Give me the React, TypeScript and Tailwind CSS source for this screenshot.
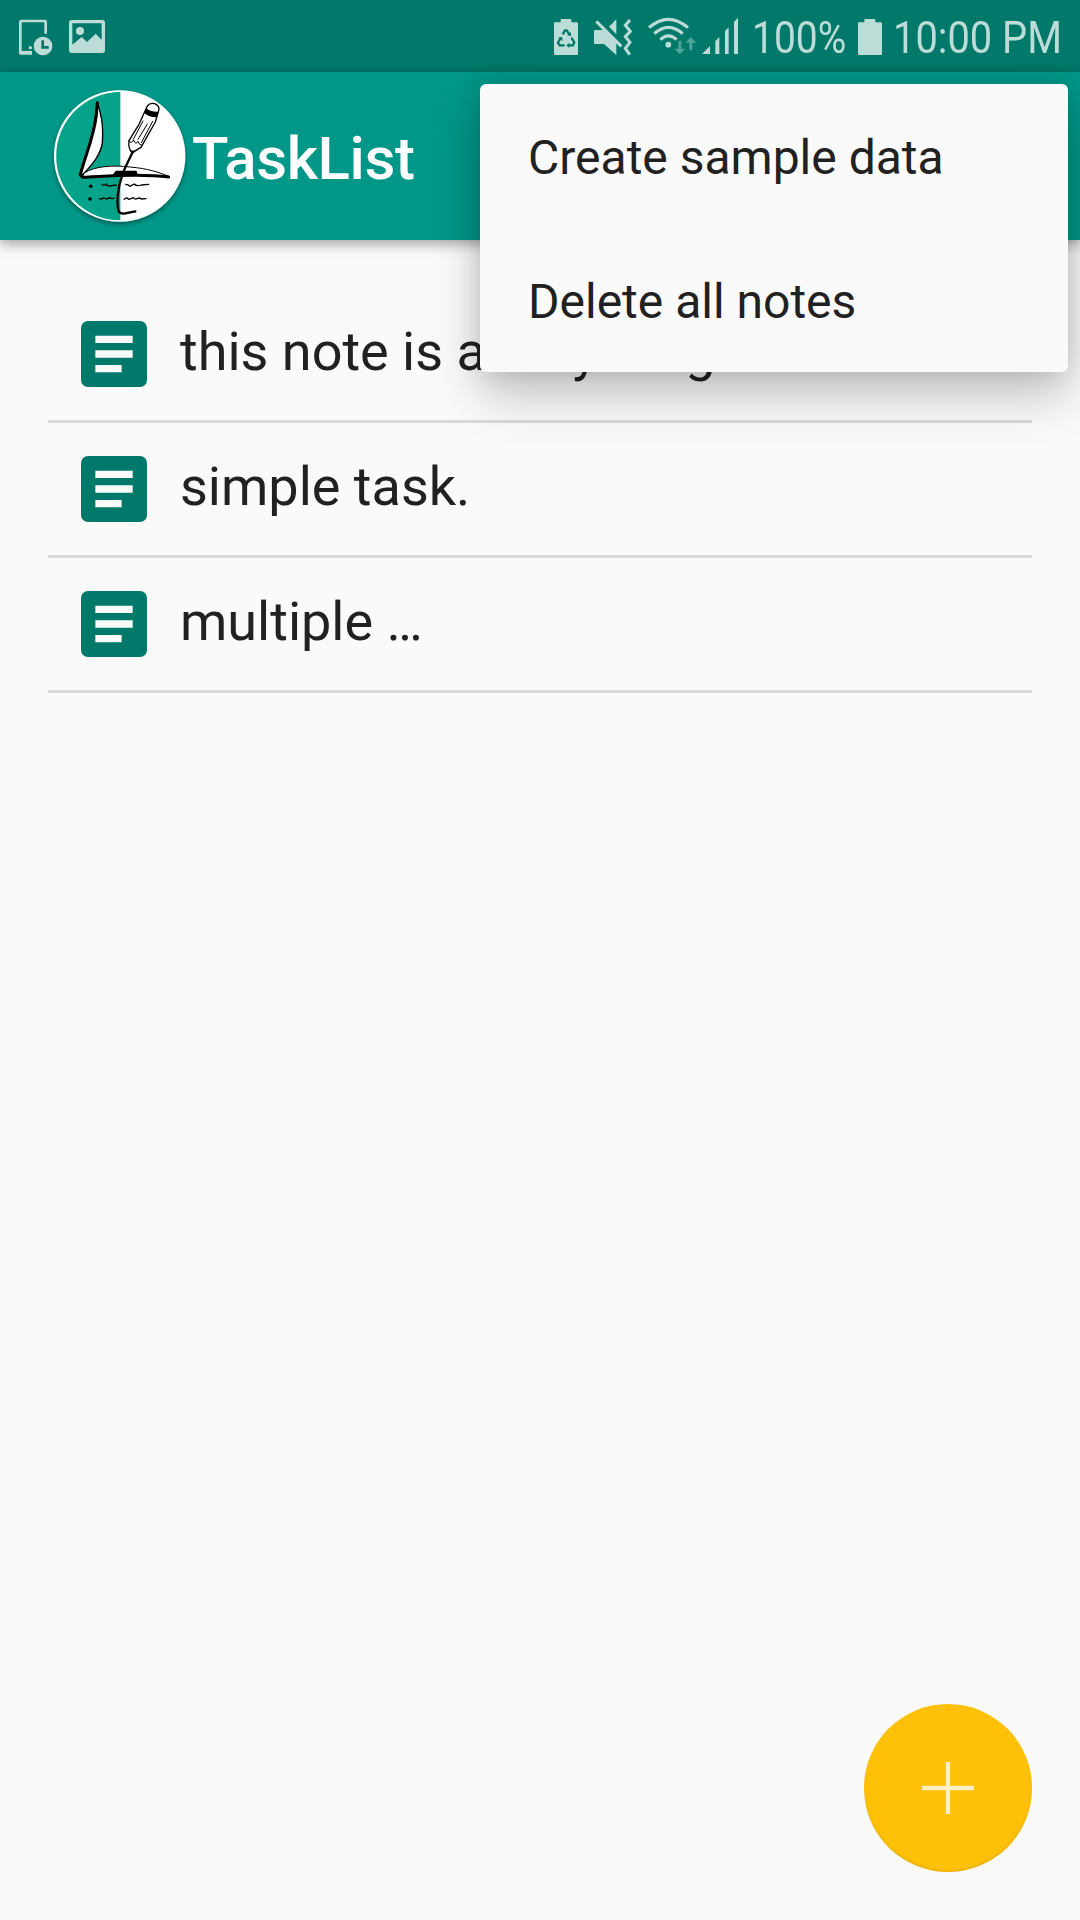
import React from "react";

const STATUS = "#bcdcd8";

function StatusBar() {
  return (
    <div className="flex h-[72px] w-full shrink-0 items-start bg-[#00796b] text-[#bcdcd8]">
      {/* notification icons */}
      <svg className="h-[72px] w-[120px] shrink-0" viewBox="0 0 360 216" fill={STATUS}>
        <path d="M96 158H63q-2 0-2-2V66q0-3 3-3H134q3 0 3 3V101" fill="none" stroke={STATUS} strokeWidth="8" />
        <path d="M57 153h39v11H62q-5 0-5-5z" />
        <circle cx="91" cy="143" r="5" />
        <circle cx="129" cy="138" r="28" />
        <path d="M128 121v21h18" fill="none" stroke="#00796b" strokeWidth="8" />
        <path
          fillRule="evenodd"
          d="M215 60H307q8 0 8 8V151q0 8-8 8H215q-8 0-8-8V68q0-8 8-8ZM217 70V134L245 111 261 126 287 101 305 119V70Z"
        />
        <circle cx="240" cy="93" r="12" />
      </svg>
      <div className="flex-1" />
      {/* system icons */}
      <svg className="h-[72px] w-[210px] shrink-0" viewBox="0 0 630 216" fill={STATUS}>
        <path d="M42 70q0-3 3-3H62V60q0-3 3-3H91q3 0 3 3v7h17q3 0 3 3v92q0 3-3 3H45q-3 0-3-3Z" />
        <g fill="none" stroke="#00796b" strokeWidth="7">
          <path d="M68 103 75 91H80L88 103" />
          <path d="M94 113 103 127 99 136H84" />
          <path d="M74 136H59L54 128 62 114" />
        </g>
        <path d="M81 106 93 108 93 96ZM88 128V144L79 136ZM54 114 66 110 68 123Z" fill="#00796b" />
        <path d="M165 90H190L229 128V165L192 132H165q-3 0-3-3V93q0-3 3-3ZM207 80 229 58V103Z" />
        <path d="M173 60 250 136" stroke="#00796b" strokeWidth="9" />
        <path d="M169 64 244 139" stroke={STATUS} strokeWidth="9" />
        <path d="M270 60 256 76 271 94 256 110 270 127 256 145 269 164" fill="none" stroke={STATUS} strokeWidth="9" />
        <g fill="none" stroke={STATUS} strokeWidth="9.500">
          <path d="M327 83Q385 33 444 83" />
          <path d="M343 101Q385 63 428 101" />
          <path d="M361 119Q385 96 410 119" />
        </g>
        <circle cx="385" cy="134" r="8.500" />
        <g fill="#4ea298">
          <path d="M415 122h9v24h12L419.500 163 403 146h12ZM448 151h9V128h12L452.500 111 436 128h12Z" />
        </g>
        <path d="M486 162 510 138V162ZM526 123 538 111V162H526ZM555 93 566 82V162H555ZM582 66 594 53V162H582Z" />
      </svg>
      <div className="w-[102px] pl-[2px] pt-[8px]">
        <span className="block w-max origin-left scale-x-[0.865] text-[45px] leading-[60px]">100%</span>
      </div>
      <svg className="h-[72px] w-[36px] shrink-0" viewBox="0 0 108 216" fill={STATUS}>
        <path d="M18 70q0-3 3-3H37V60q0-3 3-3H67q3 0 3 3v7h17q3 0 3 3v92q0 3-3 3H21q-3 0-3-3Z" />
      </svg>
      <div className="w-[192px] pl-[5px] pt-[8px]">
        <span className="block w-max origin-left scale-x-[0.885] text-[45px] leading-[60px]">10:00 PM</span>
      </div>
    </div>
  );
}

function Logo() {
  return (
    <svg className="h-[160px] w-[160px] shrink-0" viewBox="0 0 480 480">
      <defs>
        <filter id="logoShadow" x="-20%" y="-20%" width="140%" height="140%">
          <feDropShadow dx="0" dy="7" stdDeviation="6" floodColor="#000" floodOpacity="0.4" />
        </filter>
      </defs>
      <circle cx="239" cy="228" r="197" fill="#fff" filter="url(#logoShadow)" />
      <path d="M241 36A192 192 0 0 0 241 421Z" fill="#05a389" />
      <g stroke="#000" strokeLinejoin="round" strokeLinecap="round">
        <path d="M172 68C182 98 191 130 187 188C182 224 158 252 134 278L122 288C122 262 150 200 161 140Z" fill="#fff" strokeWidth="4" />
        <path d="M172 68 169 105C162 170 136 225 121 284" fill="none" strokeWidth="9" />
        <path d="M134 278C165 258 220 255 270 261C325 266 355 276 386 289L290 284 128 290Z" fill="#fff" strokeWidth="3" />
        <path d="M121 284 128 292C200 289 290 279 386 291" fill="none" strokeWidth="9" />
        <path d="M228 275H288L290 285H221Z" strokeWidth="5" />
        <path d="M278 215C268 240 254 262 247 285C232 325 229 370 236 394Q240 402 252 401L286 394" fill="none" strokeWidth="7" />
        <path d="M322 78Q329 68 344 71Q358 77 357 88L346 126 303 202 277 218Q264 208 267 182L297 133Z" fill="#fff" strokeWidth="4" />
        <path d="M319 87Q332 98 354 97L349 110Q328 109 315 98Z" strokeWidth="4" />
        <path d="M267 183Q274 193 281 180Q287 197 294 184Q298 196 305 196M309 123 280 178M322 132 294 178M338 124 304 188" fill="none" strokeWidth="3" />
        <path d="M270 212 280 220 286 212Z" />
        <path
          d="M186 313Q191 320 199 312Q202 320 209 318L229 315M257 313Q266 313 269 319L283 312Q289 320 304 315L326 313M178 356Q187 359 191 353Q197 359 205 355L211 352Q213 359 223 354M252 358Q260 350 266 358L281 353Q284 360 293 355L300 354 304 357 318 356"
          fill="none"
          strokeWidth="3.800"
        />
      </g>
      <circle cx="152" cy="319" r="5.500" />
      <circle cx="150" cy="357" r="5.500" />
    </svg>
  );
}

function AppBar() {
  return (
    <header className="relative flex h-[168px] w-full shrink-0 items-start bg-[#009688] pl-[40px] pt-[8px] shadow-[0_4px_12px_rgba(0,0,0,0.36)]">
      <Logo />
      <h1 className="-ml-[8px] mt-[43px] text-[60px] font-medium leading-[72px] tracking-[-0.4px] text-white">TaskList</h1>
    </header>
  );
}

function NoteRow({ text }: { text: string }) {
  return (
    <li className="flex h-[135px] items-start border-b-[3px] border-[#dadada] pl-[33px] pt-[33px]">
      <svg className="h-[66px] w-[66px] shrink-0" viewBox="0 0 198 198">
        <rect width="198" height="198" rx="21" fill="#00796b" />
        <path d="M43 44H155V66H43ZM43 88H155V110H43ZM43 132H122V154H43Z" fill="#fafafa" />
      </svg>
      <span className="-mt-px ml-[33px] whitespace-nowrap text-[54px] leading-[64px] text-[#212121]">{text}</span>
    </li>
  );
}

function OverflowMenu() {
  return (
    <div className="absolute left-[480px] top-[84px] flex h-[288px] w-[588px] flex-col rounded-[6px] bg-[#fafafa] shadow-[0_24px_48px_rgba(0,0,0,0.22),0_0_24px_rgba(0,0,0,0.12)]">
      {["Create sample data", "Delete all notes"].map((label) => (
        <button key={label} className="flex h-[144px] items-center px-[48px] pt-[4px] text-left text-[48px] leading-[56px] text-[#212121]">
          {label}
        </button>
      ))}
    </div>
  );
}

export default function App() {
  return (
    <div className="relative flex h-[1920px] w-[1080px] flex-col overflow-hidden bg-[#fafafa] font-['Roboto',sans-serif]">
      <StatusBar />
      <AppBar />
      <ul className="flex flex-1 flex-col px-[48px] pt-[48px]">
        {["this note is a very long", "simple task.", "multiple …"].map((t) => (
          <NoteRow key={t} text={t} />
        ))}
      </ul>
      <OverflowMenu />
      <button className="absolute bottom-[48px] right-[48px] flex h-[168px] w-[168px] items-center justify-center rounded-full bg-[#ffc107] shadow-[inset_0_-2px_2px_rgba(0,0,0,0.08)]">
        <svg className="h-[52px] w-[52px]" viewBox="0 0 52 52">
          <path d="M26 0V52M0 26H52" stroke="#fff0c3" strokeWidth="4.300" />
        </svg>
      </button>
    </div>
  );
}
